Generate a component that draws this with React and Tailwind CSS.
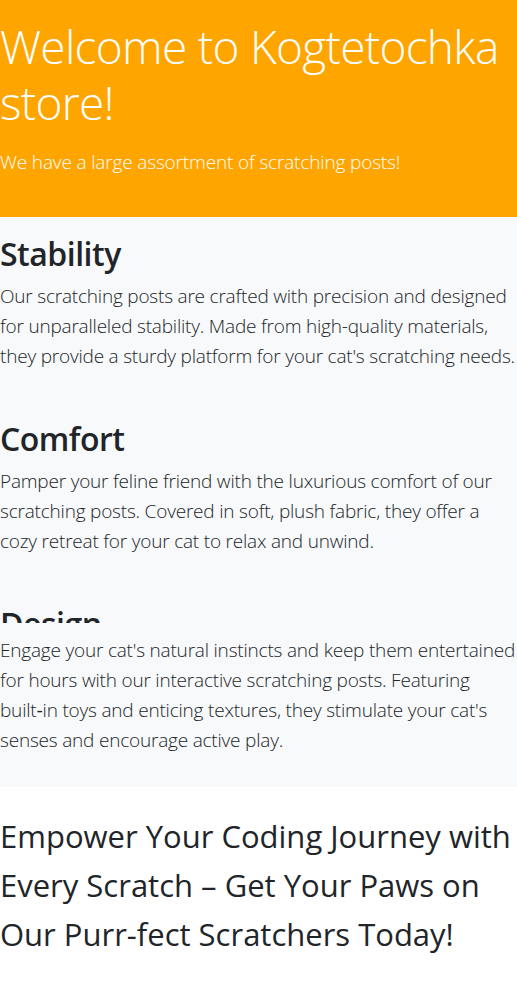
const sections = [
  {
    title: 'Stability',
    text: "Our scratching posts are crafted with precision and designed for unparalleled stability. Made from high-quality materials, they provide a sturdy platform for your cat's scratching needs.",
  },
  {
    title: 'Comfort',
    text: 'Pamper your feline friend with the luxurious comfort of our scratching posts. Covered in soft, plush fabric, they offer a cozy retreat for your cat to relax and unwind.',
  },
  {
    title: 'Design',
    // non-breaking hyphen keeps "built-in" together like the original wrap
    text: "Engage your cat's natural instincts and keep them entertained for hours with our interactive scratching posts. Featuring built\u2011in toys and enticing textures, they stimulate your cat's senses and encourage active play.",
    clipped: true,
  },
]

export default function App() {
  return (
    <div className="min-h-[998px] bg-white text-[#212529] font-['Open_Sans',sans-serif]">
      <header className="h-[217px] bg-[#ffa500] pt-[18px] text-white">
        <h1 className="text-[46px] leading-[56px] font-light tracking-[-0.7px]">
          Welcome to Kogtetochka store!
        </h1>
        <p className="mt-[17px] text-[19px] leading-[30px] font-light tracking-[-0.15px]">
          We have a large assortment of scratching posts!
        </p>
      </header>

      <main className="h-[570px] bg-[#f8f9fa] pt-[17px]">
        {sections.map((s) => (
          <section key={s.title} className="mb-[48px]">
            {s.clipped ? (
              <div className="h-[19px] overflow-hidden">
                <h2 className="text-[32px] leading-[40px] font-semibold tracking-[-0.5px]">{s.title}</h2>
              </div>
            ) : (
              <h2 className="text-[32px] leading-[40px] font-semibold tracking-[-0.5px]">{s.title}</h2>
            )}
            <p className={`${s.clipped ? 'mt-[12px]' : 'mt-[7px]'} text-[19px] leading-[30px] font-light tracking-[-0.2px]`}>
              {s.text}
            </p>
          </section>
        ))}
      </main>

      <p className="mt-[25px] text-[31px] leading-[48.75px]">
        Empower Your Coding Journey with Every Scratch – Get Your Paws on Our Purr-fect Scratchers Today!
      </p>
    </div>
  )
}
